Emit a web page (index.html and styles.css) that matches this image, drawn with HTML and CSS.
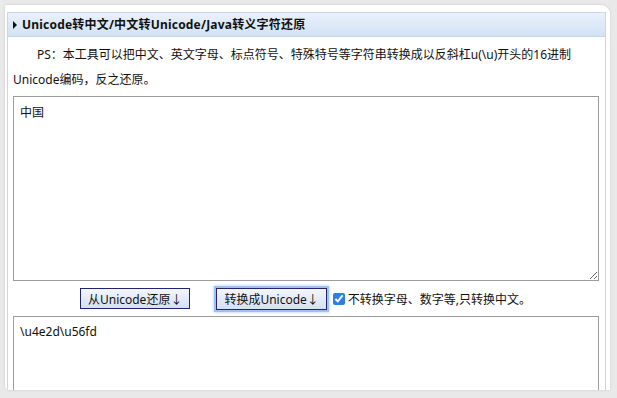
FILE: index.html
```html
<!DOCTYPE html>
<html lang="zh-CN">
<head>
<meta charset="utf-8">
<title>Unicode转中文</title>
<link rel="stylesheet" href="styles.css">
</head>
<body>
<div class="window">
  <div class="panel">
    <div class="panel-head"><span class="arrow"></span>Unicode转中文/中文转Unicode/Java转义字符还原</div>
    <div class="panel-body">
      <p class="desc">PS：本工具可以把中文、英文字母、标点符号、特殊特号等字符串转换成以反斜杠u(\u)开头的16进制Unicode编码，反之还原。</p>
      <textarea class="box box-top">中国</textarea>
      <div class="actions">
        <button class="btn">从Unicode还原↓</button>
        <button class="btn btn-focus">转换成Unicode↓</button>
        <label class="opt"><input type="checkbox" checked>不转换字母、数字等,只转换中文。</label>
      </div>
      <textarea class="box box-bottom">\u4e2d\u56fd</textarea>
    </div>
  </div>
</div>
</body>
</html>
```
FILE: styles.css
```css
html, body {
  margin: 0;
  padding: 0;
}
body {
  width: 617px;
  height: 398px;
  overflow: hidden;
  background: #e9e9e9;
  font-family: "Noto Sans", "Noto Sans CJK SC", sans-serif;
  font-size: 12px;
  color: #111;
}
.window {
  margin: 5px 7px 0 5px;
  height: 385px;
  background: #fff;
  border-top-right-radius: 9px;
  border-bottom-left-radius: 4px;
  box-shadow: 0 0 3px rgba(0,0,0,0.12);
  padding: 7px 4px 0 2px;
  box-sizing: border-box;
  overflow: hidden;
}
.panel {
  border: 1px solid #c9d6e6;
  border-bottom: none;
  height: 400px;
}
.panel-head {
  height: 23px;
  line-height: 23px;
  background: linear-gradient(#e9f1fb, #d2e2f4);
  border-bottom: 1px solid #c4d5ea;
  font-weight: bold;
  font-size: 12px;
  letter-spacing: 0.2px;
  color: #111;
  padding-left: 5px;
  display: flex;
  align-items: center;
}
.arrow {
  width: 0;
  height: 0;
  border-left: 4px solid #111;
  border-top: 4px solid transparent;
  border-bottom: 4px solid transparent;
  margin-right: 5px;
}
.panel-body {
  padding: 0 5px;
}
.desc {
  margin: 5px 0 4px;
  line-height: 25px;
  text-indent: 24px;
}
.box {
  display: block;
  width: 586px;
  box-sizing: border-box;
  border: 1px solid #9c9c9c;
  padding: 6px 6px;
  font-family: "Noto Sans", "Noto Sans CJK SC", sans-serif;
  font-size: 12px;
  color: #111;
  margin: 0;
  outline: none;
}
.box-top {
  height: 185px;
}
.box-bottom {
  height: 90px;
}
.actions {
  display: flex;
  align-items: center;
  justify-content: center;
  height: 35px;
  padding-right: 2px;
}
.btn {
  height: 21px;
  padding: 0 7px;
  border: 1px solid #23236e;
  background: linear-gradient(#f3f6fd, #d4e0f4);
  font-family: "Noto Sans", "Noto Sans CJK SC", sans-serif;
  font-size: 12px;
  color: #111;
  margin: 0;
}
.btn + .btn {
  margin-left: 26px;
}
.btn-focus {
  box-shadow: 0 0 0 2px #9cc2f2, 0 0 3px 2px #a8c9f3;
  height: 22px;
}
.opt {
  display: flex;
  align-items: center;
  margin-left: 4px;
}
.opt input {
  width: 12px;
  height: 12px;
  margin: 0 3px 0 2px;
  accent-color: #2f7fe0;
}
```
